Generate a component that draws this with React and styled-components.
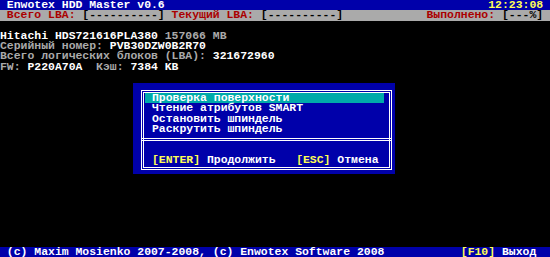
import React from "react"
import styled, { createGlobalStyle } from "styled-components"

const c = {
  white: "#ffffff",
  grey: "#aaaaaa",
  red: "#aa0000",
  yellow: "#ffff55",
  black: "#000000",
  blue: "#0000aa",
  teal: "#00aaaa",
}

const GlobalStyle = createGlobalStyle`
  html, body {
    margin: 0;
    padding: 0;
    background: #000;
  }
`

const Screen = styled.div`
  position: relative;
  width: 550px;
  height: 257px;
  overflow: hidden;
  background: #000;
  display: flex;
  flex-direction: column;
  font: 700 11.457px/10.28px "Liberation Mono", monospace;
  color: ${c.white};
`

const Line = styled.div`
  height: 10.28px;
  flex: none;
  display: flex;
  justify-content: space-between;
  align-items: center;
  white-space: pre;
  padding: 0 ${p => p.$right || 0}ch 0 ${p => p.$left || 0}ch;
  background: ${p => p.$bg || "transparent"};
  color: ${p => p.$color || c.white};
`

const T = styled.span`
  color: ${p => p.$c};
`

const Footer = styled(Line)`
  margin-top: auto;
`

/* modal window over the screen */
const Dialog = styled.div`
  position: absolute;
  left: 133px;
  top: 83px;
  width: 262px;
  height: 91px;
  box-sizing: border-box;
  padding: 7px 3px 4px 8px;
  background: ${c.blue};
`

const Frame = styled.div`
  height: 100%;
  box-sizing: border-box;
  border: 3px double ${c.white};
  display: flex;
  flex-direction: column;
`

const Menu = styled.div`
  display: flex;
  flex-direction: column;
  padding-top: 0;
`

const Item = styled.div`
  height: 10.28px;
  line-height: 10.28px;
  margin: 0 5px 0 1px;
  padding-left: 7px;
  white-space: pre;
  background: ${p => (p.$active ? c.teal : "transparent")};
`

const Divider = styled.div`
  margin: 4px -3px 0;
  border-top: 3px double ${c.white};
`

const Actions = styled.div`
  margin-top: auto;
  margin-bottom: 2px;
  height: 10.28px;
  line-height: 10.28px;
  padding-left: 8px;
  white-space: pre;
`

const menu = [
  "Проверка поверхности",
  "Чтение атрибутов SMART",
  "Остановить шпиндель",
  "Раскрутить шпиндель",
]

export default function App() {
  return (
    <>
      <GlobalStyle />
      <Screen>
        <Line $bg={c.blue} $left={1} $right={1}>
          <span>Enwotex HDD Master v0.6</span>
          <T $c={c.yellow}>12:23:08</T>
        </Line>
        <Line $bg={c.grey} $left={1} $right={1}>
          <span>
            <T $c={c.red}>Всего LBA: </T>
            <T $c={c.black}>[----------]</T>
            <T $c={c.red}> Текущий LBA: </T>
            <T $c={c.black}>[----------]</T>
          </span>
          <span>
            <T $c={c.red}>Выполнено: </T>
            <T $c={c.black}>[---%]</T>
          </span>
        </Line>
        <Line />
        <Line>
          <span>
            Hitachi HDS721616PLA380 <T $c={c.grey}>157066 MB</T>
          </span>
        </Line>
        <Line>
          <span>
            <T $c={c.grey}>Серийный номер: </T>PVB30DZW0B2R70
          </span>
        </Line>
        <Line>
          <span>
            <T $c={c.grey}>Всего логических блоков (LBA): </T>321672960
          </span>
        </Line>
        <Line>
          <span>
            <T $c={c.grey}>FW: </T>P220A70A  <T $c={c.grey}>Кэш: </T>7384 KB
          </span>
        </Line>
        <Footer $bg={c.blue} $left={1} $right={2}>
          <span>(c) Maxim Mosienko 2007-2008, (c) Enwotex Software 2008</span>
          <span>
            <T $c={c.yellow}>[F10]</T> Выход
          </span>
        </Footer>

        <Dialog>
          <Frame>
            <Menu>
              {menu.map((m, i) => (
                <Item key={m} $active={i === 0}>{m}</Item>
              ))}
            </Menu>
            <Divider />
            <Actions>
              <T $c={c.yellow}>[ENTER]</T> Продолжить   <T $c={c.yellow}>[ESC]</T> Отмена
            </Actions>
          </Frame>
        </Dialog>
      </Screen>
    </>
  )
}
